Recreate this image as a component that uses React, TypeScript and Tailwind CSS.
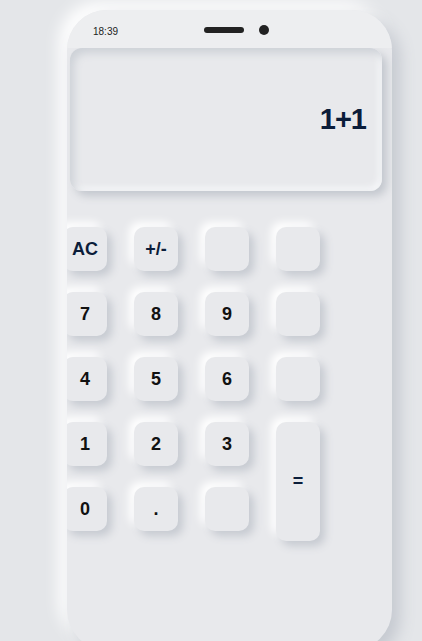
const keys: { label: string; tone?: "navy" | "black"; tall?: boolean }[] = [
  { label: "AC", tone: "navy" },
  { label: "+/-", tone: "navy" },
  { label: "" },
  { label: "" },
  { label: "7" },
  { label: "8" },
  { label: "9" },
  { label: "" },
  { label: "4" },
  { label: "5" },
  { label: "6" },
  { label: "" },
  { label: "1" },
  { label: "2" },
  { label: "3" },
  { label: "=", tone: "navy", tall: true },
  { label: "0" },
  { label: "." },
  { label: "" },
];

function Key({ label, tone, tall }: { label: string; tone?: string; tall?: boolean }) {
  return (
    <button
      className={
        "flex items-center justify-center rounded-[10px] bg-[#e8e9ec] text-[18px] font-bold shadow-[5px_5px_9px_#c6cad1,-5px_-5px_9px_#ffffff] " +
        (tone === "navy" ? "text-[#0b1d3a] " : "text-[#111111] ") +
        (tall ? "row-span-2 h-[119px] w-[44px] self-start" : "h-[44px] w-[44px]")
      }
    >
      {label}
    </button>
  );
}

export default function App() {
  return (
    <div className="h-[641px] overflow-hidden bg-[#e4e6e9] font-['Liberation_Sans',Arial,sans-serif]">
      <div className="ml-[67px] mt-[10px] h-[640px] w-[325px] overflow-hidden rounded-[40px] bg-[#e8e9ec] shadow-[8px_8px_16px_#c5c9d0,-8px_-8px_16px_#ffffff]">
        <div className="relative flex h-[38px] items-center bg-[#edeef0] pl-[26px] pt-[4px] text-[10px] text-[#222]">
          <span>18:39</span>
          <div className="absolute left-[137px] top-[17px] h-[6px] w-[40px] rounded-full bg-[#222]" />
          <div className="absolute left-[192px] top-[15px] h-[10px] w-[10px] rounded-full bg-[#222]" />
        </div>
        <div className="ml-[3px] flex h-[143px] w-[312px] items-center justify-end rounded-[12px] bg-[#e8e9ec] pr-[16px] shadow-[inset_4px_5px_8px_#cdd1d7,inset_-3px_-3px_6px_#f7f8fa,5px_5px_8px_#c3c7ce]">
          <span className="text-[29px] font-bold tracking-[-1px] text-[#0b1d3a]">1+1</span>
        </div>
        <div className="-ml-[4px] mt-[36px] grid grid-cols-[repeat(4,44px)] auto-rows-[44px] gap-x-[27px] gap-y-[21px]">
          {keys.map((k, i) => (
            <Key key={i} label={k.label} tone={k.tone} tall={k.tall} />
          ))}
        </div>
      </div>
    </div>
  );
}
